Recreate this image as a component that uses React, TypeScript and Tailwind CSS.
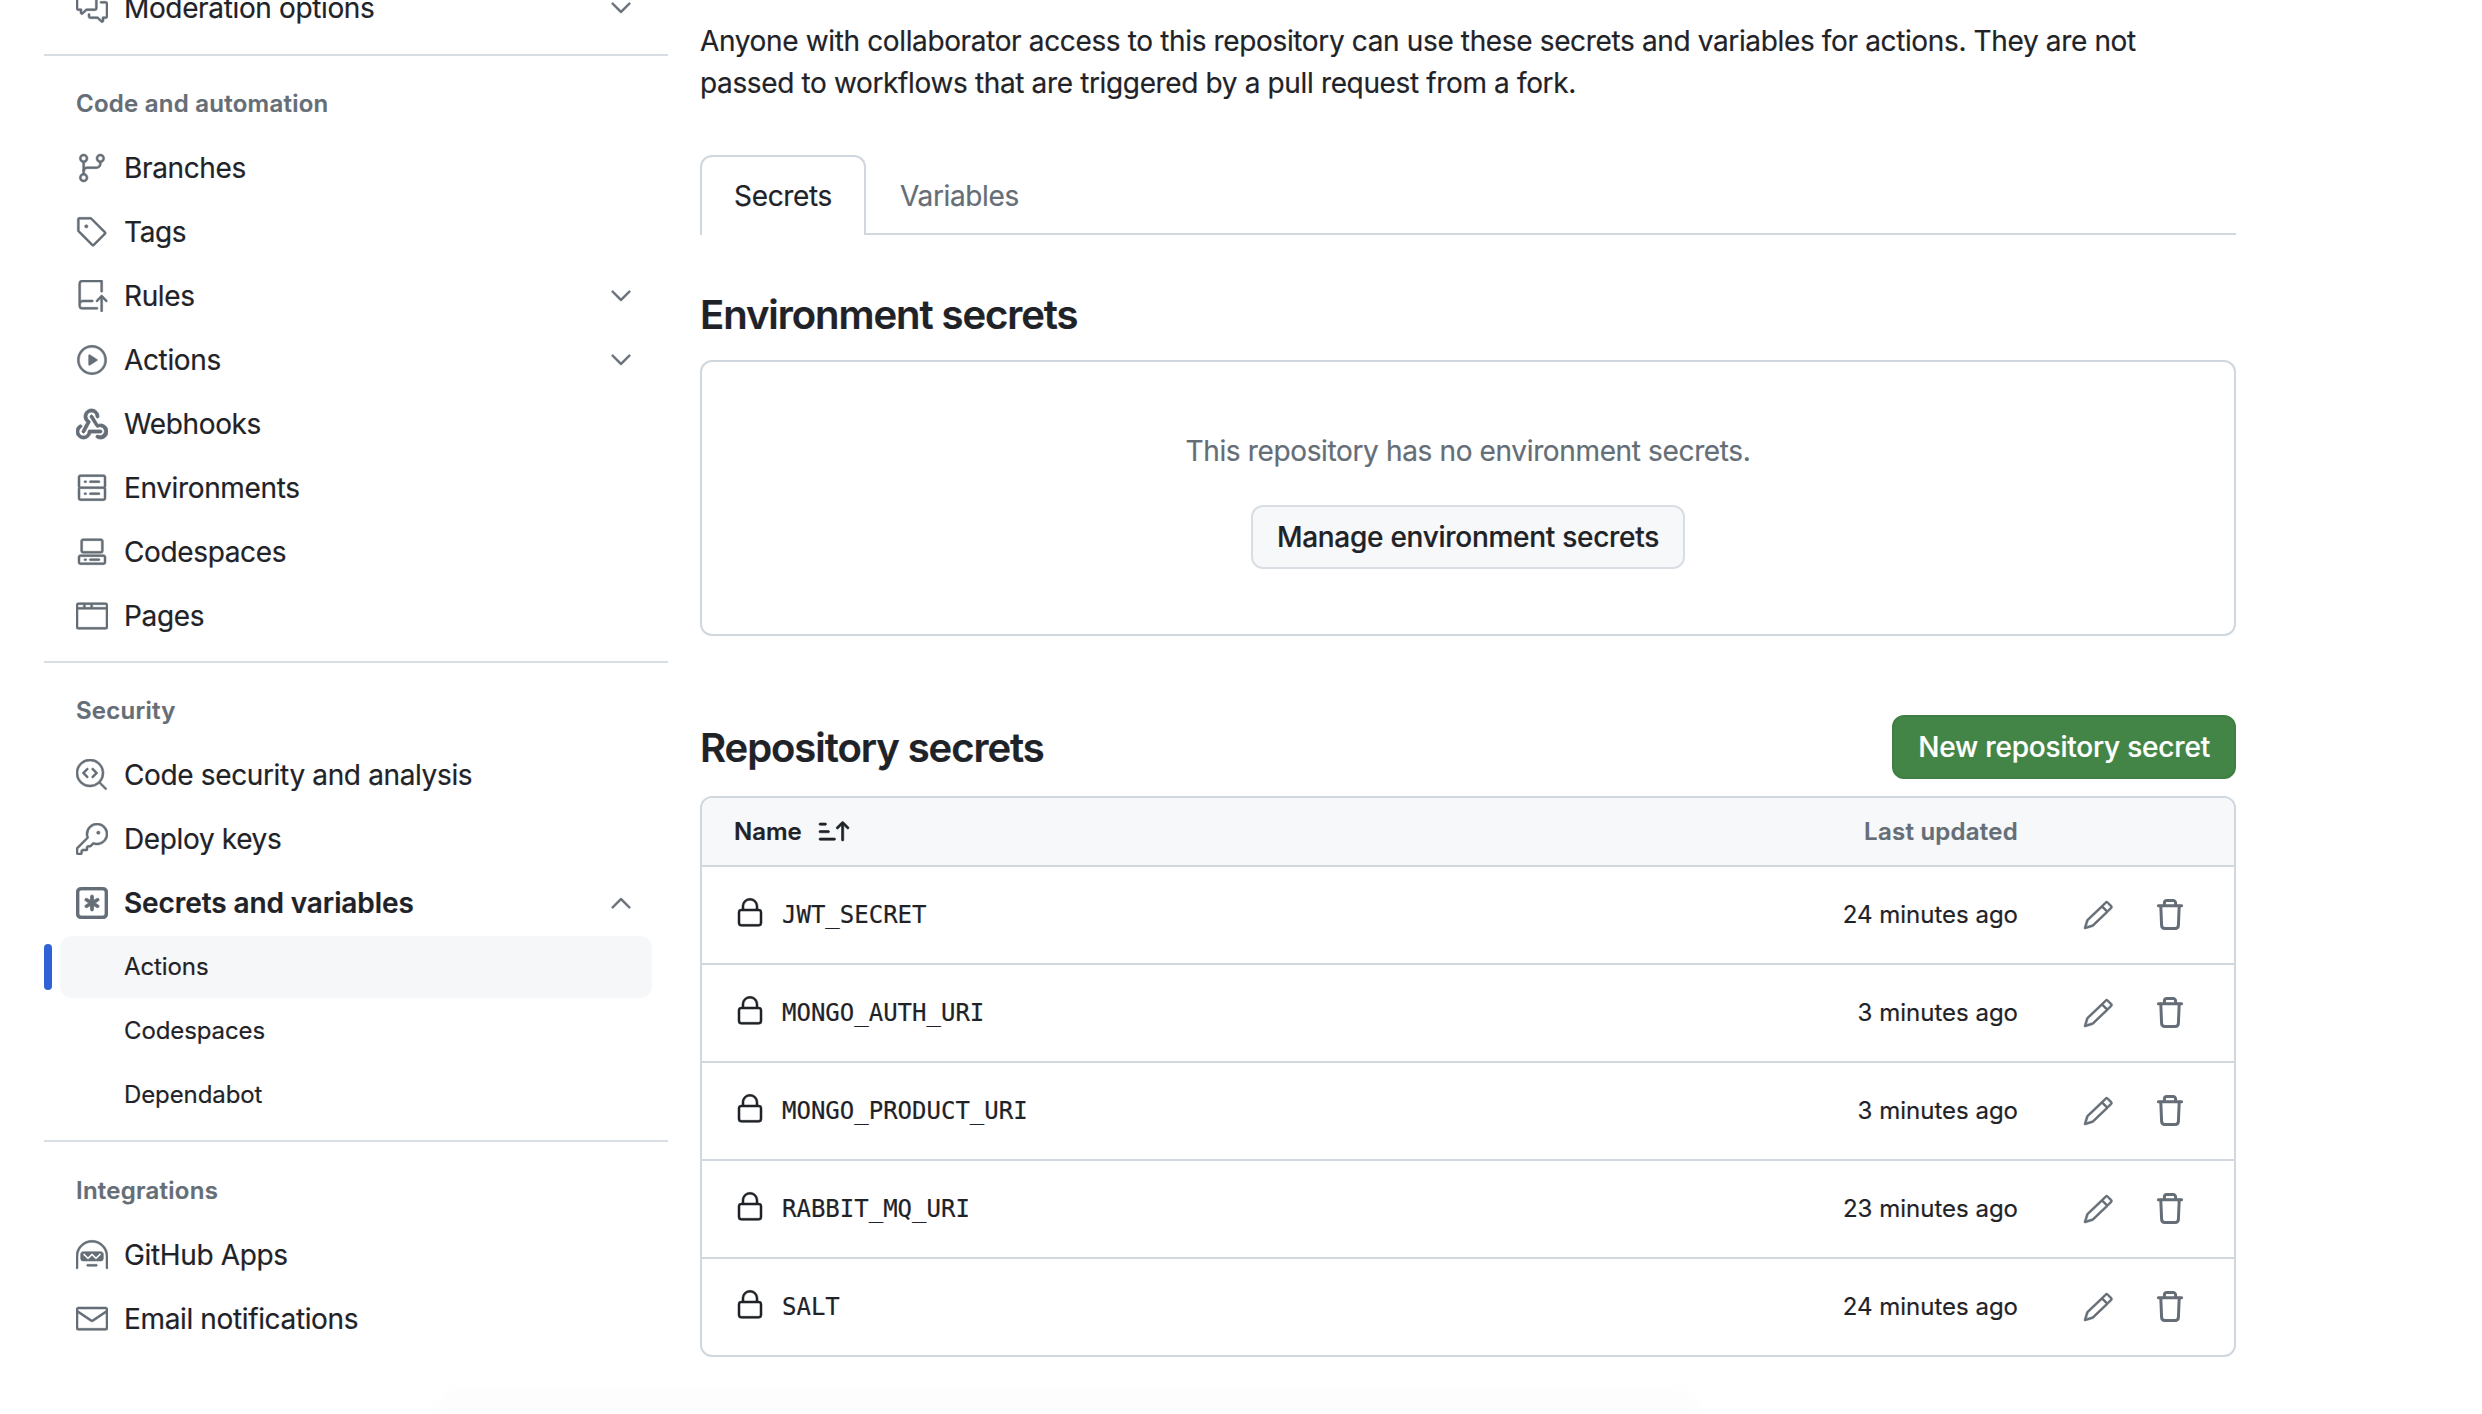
import React from "react";
import {
  GoCommentDiscussion, GoChevronDown, GoChevronUp, GoGitBranch, GoTag, GoRepoPush, GoPlay, GoServer,
  GoCodespaces, GoBrowser, GoCodescan, GoKey, GoHubot, GoMail, GoLock, GoPencil, GoSortAsc,
} from "react-icons/go";

type IconProps = { className?: string };
type Item = { icon: React.ComponentType<IconProps>; label: string; chevron?: boolean };

function GoWebhook({ className }: IconProps) {
  return (
    <svg viewBox="0 0 16 16" fill="currentColor" className={className}>
      <path d="M5.5 4.25a2.25 2.25 0 0 1 4.5 0 .75.75 0 0 0 1.5 0 3.75 3.75 0 1 0-6.14 2.889l-2.272 4.258a.75.75 0 0 0 1.324.706L7 7.25a.75.75 0 0 0-.309-1.015A2.25 2.25 0 0 1 5.5 4.25Z" />
      <path d="M7.364 3.607a.75.75 0 0 1 1.03.257l2.608 4.349a3.75 3.75 0 1 1-.628 6.785.75.75 0 0 1 .64-1.356 2.25 2.25 0 1 0 .017-4.07.75.75 0 0 1-.978-.29L7.107 4.636a.75.75 0 0 1 .257-1.03Z" />
      <path d="M2.9 8.776A.75.75 0 0 1 2.625 9.8 2.25 2.25 0 1 0 6 11.75a.75.75 0 0 1 .75-.751h5.5a.75.75 0 0 1 0 1.5H7.425a3.751 3.751 0 1 1-5.55-3.998.75.75 0 0 1 1.024.274Z" />
    </svg>
  );
}

function GoKeyAsterisk({ className }: IconProps) {
  return (
    <svg viewBox="0 0 16 16" fill="currentColor" className={className}>
      <path d="M0 2.75A2.75 2.75 0 0 1 2.75 0h10.5A2.75 2.75 0 0 1 16 2.75v10.5A2.75 2.75 0 0 1 13.25 16H2.75A2.75 2.75 0 0 1 0 13.25ZM2.75 1.5c-.69 0-1.25.56-1.25 1.25v10.5c0 .69.56 1.25 1.25 1.25h10.5c.69 0 1.25-.56 1.25-1.25V2.75c0-.69-.56-1.25-1.25-1.25Z" />
      <path d="M8 4a.75.75 0 0 1 .75.75V6.7l1.69-.975a.75.75 0 0 1 .75 1.3L9.5 8l1.69.976a.75.75 0 0 1-.75 1.298L8.75 9.3v1.951a.75.75 0 0 1-1.5 0V9.299l-1.69.975a.75.75 0 0 1-.75-1.298L6.5 8l-1.69-.975a.75.75 0 0 1 .75-1.3l1.69.976V4.75A.75.75 0 0 1 8 4Z" />
    </svg>
  );
}

function TrashIcon({ className }: IconProps) {
  return (
    <svg viewBox="0 0 16 16" fill="none" stroke="currentColor" strokeWidth="1.5" strokeLinecap="round" strokeLinejoin="round" className={className}>
      <path d="M2.2 3.4h11.6" />
      <path d="M5.2 3.2V2a1.2 1.2 0 0 1 1.2-1.2h3.2A1.2 1.2 0 0 1 10.8 2v1.2" />
      <path d="M3.4 3.6l.4 9.6a1.6 1.6 0 0 0 1.6 1.5h5.2a1.6 1.6 0 0 0 1.6-1.5l.4-9.6" />
    </svg>
  );
}

const icon = "h-8 w-8 shrink-0 stroke-current stroke-[0.4] text-[#656d76]";

function Row({ icon: Icon, label, chevron }: Item) {
  return (
    <div className="flex h-16 items-center pr-[63px] pl-[76px]">
      <Icon className={`mr-4 ${icon}`} />
      <span className="flex-1">{label}</span>
      {chevron && <GoChevronDown className={icon} />}
    </div>
  );
}

function Heading({ children }: { children: React.ReactNode }) {
  return (
    <div className="mb-[3px] ml-[76px] flex h-[62px] items-center pt-1 text-[24px] font-semibold tracking-[0.25px] text-[#656d76]">{children}</div>
  );
}

const rule = "ml-[44px] mr-[32px] h-[2px] bg-[#d8dee4]";

const code: Item[] = [
  { icon: GoGitBranch, label: "Branches" },
  { icon: GoTag, label: "Tags" },
  { icon: GoRepoPush, label: "Rules", chevron: true },
  { icon: GoPlay, label: "Actions", chevron: true },
  { icon: GoWebhook, label: "Webhooks" },
  { icon: GoServer, label: "Environments" },
  { icon: GoCodespaces, label: "Codespaces" },
  { icon: GoBrowser, label: "Pages" },
];

const secrets = [
  { name: "JWT_SECRET", time: "24 minutes ago" },
  { name: "MONGO_AUTH_URI", time: "3 minutes ago" },
  { name: "MONGO_PRODUCT_URI", time: "3 minutes ago" },
  { name: "RABBIT_MQ_URI", time: "23 minutes ago" },
  { name: "SALT", time: "24 minutes ago" },
];

function Sidebar() {
  return (
    <aside className="-mt-[24px] w-[700px] shrink-0 text-[28px] tracking-[-0.36px]">
      <Row icon={GoCommentDiscussion} label="Moderation options" chevron />
      <div className={`${rule} mt-[14px]`} />
      <div className="mt-[15px]"><Heading>Code and automation</Heading></div>
      {code.map((i) => <Row key={i.label} {...i} />)}
      <div className={`${rule} mt-[13px]`} />
      <div className="mt-[15px]"><Heading>Security</Heading></div>
      <Row icon={GoCodescan} label="Code security and analysis" />
      <Row icon={GoKey} label="Deploy keys" />
      <div className="flex h-16 items-center pr-[63px] pl-[76px]">
        <GoKeyAsterisk className={`mr-4 ${icon}`} />
        <span className="flex-1 font-semibold tracking-[-0.1px]">Secrets and variables</span>
        <GoChevronUp className={icon} />
      </div>
      <div className="flex h-16 items-center">
        <div className="ml-[44px] h-[46px] w-2 rounded-full bg-[#2f63d5]" />
        <div className="mr-[48px] ml-2 flex h-[62px] flex-1 items-center rounded-xl bg-[#f6f7f9] pl-[64px] text-[24px] tracking-[-0.1px]">Actions</div>
      </div>
      <div className="flex h-16 items-center pl-[124px] text-[24px] tracking-[-0.1px]">Codespaces</div>
      <div className="flex h-16 items-center pl-[124px] text-[24px] tracking-[-0.1px]">Dependabot</div>
      <div className={`${rule} mt-[13px]`} />
      <div className="mt-[16px]"><Heading>Integrations</Heading></div>
      <Row icon={GoHubot} label="GitHub Apps" />
      <Row icon={GoMail} label="Email notifications" />
    </aside>
  );
}

function Main() {
  return (
    <main className="w-[1536px] shrink-0 text-[28px] tracking-[-0.36px]">
      <p className="mt-[20px] leading-[42px]">
        Anyone with collaborator access to this repository can use these secrets and variables for actions. They are not
        <br />
        passed to workflows that are triggered by a pull request from a fork.
      </p>
      <div className="mt-[51px] flex h-[80px] border-b-2 border-[#d0d7de]">
        <div className="-mb-[2px] flex h-[80px] w-[166px] items-center justify-center rounded-t-xl border-2 border-b-0 border-[#d0d7de] bg-white">Secrets</div>
        <div className="flex items-center pt-[3px] pl-[34px] text-[#656d76]">Variables</div>
      </div>
      <h2 className="mt-[52px] text-[40px] leading-[56px] font-semibold tracking-[-1.05px]">Environment secrets</h2>
      <div className="mt-[17px] flex h-[276px] flex-col items-center rounded-xl border-2 border-[#d0d7de] pt-[68px]">
        <div className="leading-[42px] text-[#656d76]">This repository has no environment secrets.</div>
        <button className="mt-[33px] h-16 rounded-xl border-2 border-[#d8dee4] bg-[#f6f8fa] px-6 font-medium tracking-[-0.28px]">Manage environment secrets</button>
      </div>
      <div className="mt-[79px] flex h-16 items-center justify-between">
        <h2 className="pt-[2px] text-[40px] font-semibold tracking-[-1.05px]">Repository secrets</h2>
        <button className="h-16 rounded-xl border-2 border-[#3f7f43] bg-[#438547] px-6 font-medium tracking-[-0.2px] text-white">New repository secret</button>
      </div>
      <div className="mt-[17px] overflow-hidden rounded-xl border-2 border-[#d0d7de] tracking-normal">
        <div className="flex h-[69px] items-center border-b-2 border-[#d0d7de] bg-[#f6f8fa] pr-[216px] pl-8 text-[24px] font-semibold">
          <span>Name</span>
          <GoSortAsc className="ml-[14px] h-9 w-9 stroke-current stroke-[0.4]" />
          <span className="ml-auto tracking-[0.25px] text-[#656d76]">Last updated</span>
        </div>
        {secrets.map((s, i) => (
          <div key={s.name} className={`flex items-center pr-[48px] pl-[32px] ${i < secrets.length - 1 ? "h-[98px] border-b-2 border-[#d0d7de]" : "h-[96px]"}`}>
            <GoLock className="mb-[5px] h-8 w-8 shrink-0 stroke-current stroke-[0.4]" />
            <span className="ml-[16px] font-['DejaVu_Sans_Mono',monospace] text-[24px]">{s.name}</span>
            <span className="ml-auto text-[24px]">{s.time}</span>
            <GoPencil className="ml-[64px] h-8 w-8 stroke-current stroke-[0.4] text-[#656d76]" />
            <TrashIcon className="ml-[40px] h-8 w-8 text-[#656d76]" />
          </div>
        ))}
      </div>
    </main>
  );
}

export default function App() {
  return (
    <div className="relative flex h-[1414px] overflow-hidden bg-white font-['Inter',sans-serif] text-[#1f2328] [-webkit-text-stroke:0.2px]">
      <Sidebar />
      <Main />
      <div className="absolute bottom-0 left-[436px] h-[26px] w-[1265px] rounded-t-[40px] bg-[#fdfdfd] blur-[4px]" />
    </div>
  );
}
